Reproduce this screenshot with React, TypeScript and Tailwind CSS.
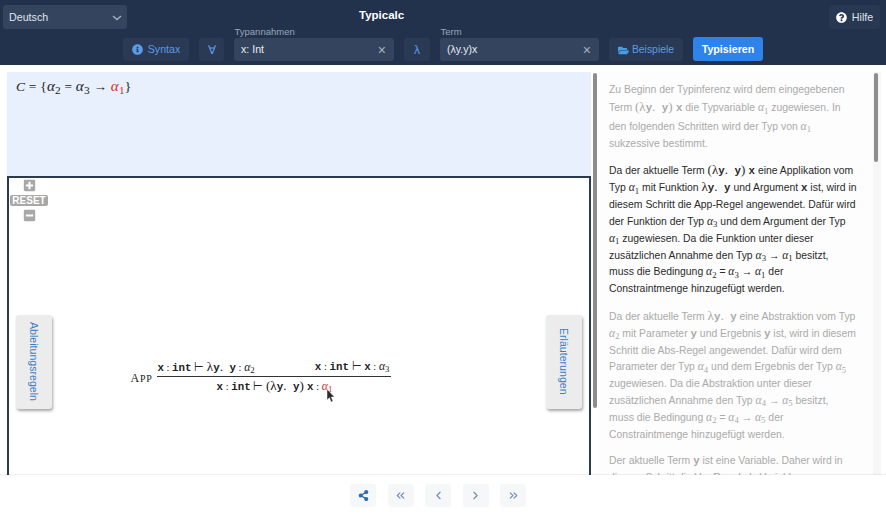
import { ReactNode } from 'react';
import { FaInfoCircle, FaQuestionCircle, FaFolderOpen, FaShareAlt, FaPlusSquare, FaMinusSquare } from 'react-icons/fa';
import { ChevronLeft, ChevronRight, ChevronsLeft, ChevronsRight } from 'lucide-react';

const serif = 'font-["Liberation_Serif",serif]';
const mono = 'font-["Liberation_Mono",monospace] font-bold';

function A({ n, red }: { n: number; red?: boolean }) {
  return (
    <span className={`${serif} whitespace-nowrap text-[1.12em] ${red ? 'text-[#d0302a]' : ''}`}>
      <i>α</i>
      <sub>{n}</sub>
    </span>
  );
}

function T({ children }: { children: ReactNode }) {
  return <span className={`${mono} text-[10.8px]`}>{children}</span>;
}

function S({ children }: { children: ReactNode }) {
  return <span className={`${serif} text-[1.25em]`}>{children}</span>;
}

function Term() {
  return (
    <S>
      (λ<T>y</T>.&nbsp;&nbsp;<T>y</T>) <T>x</T>
    </S>
  );
}

function Abs() {
  return (
    <S>
      λ<T>y</T>.&nbsp;&nbsp;<T>y</T>
    </S>
  );
}

function Inp({ label, value, width }: { label: string; value: string; width: string }) {
  return (
    <div className={`flex flex-col ${width}`}>
      <span className="h-[12px] pl-[0.5px] text-[9.5px] leading-[11px] text-[#9aa6b8]">{label}</span>
      <div className="flex h-[23px] items-center justify-between rounded-[3px] bg-[#34445f] pl-[7px] pr-[8px] pt-[1px] text-[10.6px] text-[#e8ecf2]">
        <span>{value}</span>
        <span className="text-[14px] leading-none text-[#a6b0bf]">×</span>
      </div>
    </div>
  );
}

function Pager({ children, dark }: { children: ReactNode; dark?: boolean }) {
  return (
    <div className={`flex h-[23px] w-[26px] items-center justify-center rounded-[3px] bg-[#f6f7f9] text-[11px] ${dark ? 'text-[#2f6bb5]' : 'text-[#6b8bb8]'}`}>
      {children}
    </div>
  );
}

function Side({ label }: { label: string }) {
  return (
    <div className="flex h-[94px] w-[36px] items-center justify-center rounded-[3px] bg-[#ececec] pr-[2px] text-[10.6px] text-[#3f7cc4] shadow-[1px_2px_3px_rgba(0,0,0,0.35)] [writing-mode:vertical-rl]">
      {label}
    </div>
  );
}

export default function App() {
  return (
    <div className='flex h-[520px] w-[886px] flex-col overflow-hidden bg-white font-["Liberation_Sans",sans-serif]'>
      <header className="h-[65px] shrink-0 bg-[#22324d] pt-[5px]">
        <div className="flex h-[21px] items-start pl-[3px] pr-[6px]">
          <div className="flex h-[24px] w-[124px] items-center justify-between rounded-[3px] bg-[#34445f] pl-[6px] pr-[5px] pt-[1px] text-[10.7px] text-[#dfe4ec]">
            <span>Deutsch</span>
            <svg width="10" height="6" viewBox="0 0 10 6" fill="none" stroke="#a6b0bf" strokeWidth="1.4">
              <path d="M1 1l4 3.5L9 1" />
            </svg>
          </div>
          <div className="ml-[232px] text-[11.5px] font-bold leading-[21px] text-white">Typicalc</div>
          <div className="ml-auto flex h-[24px] w-[51px] items-center justify-center gap-[5px] rounded-[3px] bg-[#283852] pt-[1px] text-[10.7px] text-[#dfe4ec]">
            <FaQuestionCircle className="text-[11px] text-white" />
            Hilfe
          </div>
        </div>
        <div className="flex items-end gap-[10px] pl-[123px]">
          <div className="flex h-[23px] w-[66px] items-center justify-center gap-[5px] rounded-[3px] bg-[#2a3a55] text-[10.6px] text-[#5b9be8]">
            <FaInfoCircle className="text-[11px]" />
            Syntax
          </div>
          <div className="flex h-[23px] w-[25px] items-center justify-center rounded-[3px] bg-[#2a3a55] text-[12px] text-[#5b9be8]">∀</div>
          <Inp label="Typannahmen" value="x: Int" width="w-[160px]" />
          <div className="flex h-[23px] w-[26px] items-center justify-center rounded-[3px] bg-[#2a3a55] text-[12px] text-[#5b9be8]">λ</div>
          <Inp label="Term" value="(λy.y)x" width="w-[159px]" />
          <div className="flex h-[23px] w-[74px] items-center justify-center gap-[3px] rounded-[3px] bg-[#2a3a55] pt-[1px] text-[10.4px] text-[#5b9be8]">
            <FaFolderOpen className="text-[11px] text-[#4a9de0]" />
            Beispiele
          </div>
          <div className="flex h-[24px] w-[70px] items-center justify-center rounded-[3px] bg-[#2d83ea] text-[10.7px] font-bold text-white">Typisieren</div>
        </div>
      </header>

      <main className="flex min-h-0 flex-1 overflow-hidden pl-[7px] pt-[7px]">
        <div className="flex w-[584px] shrink-0 flex-col">
          <div className={`h-[104px] shrink-0 bg-[#e8f0fe] pl-[9px] pt-[5px] text-[13.5px] leading-[18px] tracking-[0.2px] text-[#222] ${serif}`}>
            <i>C</i> = {'{'}
            <A n={2} /> = <A n={3} /> → <A n={1} red />
            {'}'}
          </div>
          <div className="relative flex h-[370px] shrink-0 items-center justify-between border-2 border-b-0 border-[#2c3a50] px-[7px] pb-[1px]">
            <div className="absolute left-[1px] top-[1px] flex w-[38px] flex-col items-center text-[#a8a8a8]">
              <FaPlusSquare className="text-[13px]" />
              <span className="mt-[3px] rounded-[2px] bg-[#a8a8a8] px-[2px] text-[10px] font-bold leading-[11px] text-white">RESET</span>
              <FaMinusSquare className="mt-[3px] text-[13px]" />
            </div>
            <Side label="Ableitungsregeln" />
            <div className={`mb-[-33px] mr-[76px] flex items-center gap-[5px] text-[10.5px] text-[#222] ${serif}`}>
              <span className="text-[12px] tracking-[0.7px]">A<span className="text-[10px]">PP</span></span>
              <div className="relative flex w-[234px] flex-col items-center">
                <div className="flex w-full justify-between border-b border-[#333] pb-[1px] pr-[2px] leading-[14px]">
                  <span><T>x</T> : <T>int</T> ⊢ <Abs /> : <A n={2} /></span>
                  <span><T>x</T> : <T>int</T> ⊢ <T>x</T> : <A n={3} /></span>
                </div>
                <div className="leading-[17px]">
                  <T>x</T> : <T>int</T> ⊢ <Term /> : <A n={1} red />
                </div>
                <svg className="absolute left-[169px] top-[29px]" width="9" height="14" viewBox="0 0 9 14">
                  <path d="M1 0v11l2.5-2.3L5 13l2-.8-1.7-4.2H8.5z" fill="#2a2a2a" stroke="#fff" strokeWidth="0.5" />
                </svg>
              </div>
            </div>
            <Side label="Erläuterungen" />
          </div>
        </div>

        <div className="flex w-[7px] shrink-0 justify-center">
          <div className="mt-[1px] h-[335px] w-[4px] rounded-[2px] bg-[#8d8d8d]" />
        </div>

        <div className="h-[420px] w-[275px] shrink-0 overflow-hidden bg-[#fdfdfd] pl-[11px] pt-[9px] text-[10.4px] leading-[16.8px] text-[#aaaaaa]">
          <p className="leading-[17.4px]">
            Zu Beginn der Typinferenz wird dem eingegebenen<br />
            Term <Term /> die Typvariable <A n={1} /> zugewiesen. In<br />
            den folgenden Schritten wird der Typ von <A n={1} /><br />
            sukzessive bestimmt.
          </p>
          <p className="mt-[9px] text-[#2a2a2a]">
            Da der aktuelle Term <Term /> eine Applikation vom<br />
            Typ <A n={1} /> mit Funktion <Abs /> und Argument <T>x</T> ist, wird in<br />
            diesem Schritt die App-Regel angewendet. Dafür wird<br />
            der Funktion der Typ <A n={3} /> und dem Argument der Typ<br />
            <A n={1} /> zugewiesen. Da die Funktion unter dieser<br />
            zusätzlichen Annahme den Typ <A n={3} /> → <A n={1} /> besitzt,<br />
            muss die Bedingung <A n={2} /> = <A n={3} /> → <A n={1} /> der<br />
            Constraintmenge hinzugefügt werden.
          </p>
          <p className="mt-[10px]">
            Da der aktuelle Term <Abs /> eine Abstraktion vom Typ<br />
            <A n={2} /> mit Parameter <T>y</T> und Ergebnis <T>y</T> ist, wird in diesem<br />
            Schritt die Abs-Regel angewendet. Dafür wird dem<br />
            Parameter der Typ <A n={4} /> und dem Ergebnis der Typ <A n={5} /><br />
            zugewiesen. Da die Abstraktion unter dieser<br />
            zusätzlichen Annahme den Typ <A n={4} /> → <A n={5} /> besitzt,<br />
            muss die Bedingung <A n={2} /> = <A n={4} /> → <A n={5} /> der<br />
            Constraintmenge hinzugefügt werden.
          </p>
          <p className="mt-[10px]">
            Der aktuelle Term <T>y</T> ist eine Variable. Daher wird in<br />
            diesem Schritt die Var-Regel als Variable
          </p>
        </div>

        <div className="flex w-[8px] shrink-0 justify-start bg-[#f6f6f6] pl-[1px]">
          <div className="mt-[1px] h-[89px] w-[4px] rounded-[2px] bg-[#8d8d8d]" />
        </div>
      </main>

      <footer className="relative flex h-[45px] shrink-0 items-start gap-[11.5px] bg-white pl-[350px] pt-[9px] shadow-[0_-1px_1px_rgba(0,0,0,0.06)]">
        <Pager dark><FaShareAlt /></Pager>
        <Pager><ChevronsLeft size={13} /></Pager>
        <Pager><ChevronLeft size={13} /></Pager>
        <Pager><ChevronRight size={13} /></Pager>
        <Pager><ChevronsRight size={13} /></Pager>
      </footer>
    </div>
  );
}
